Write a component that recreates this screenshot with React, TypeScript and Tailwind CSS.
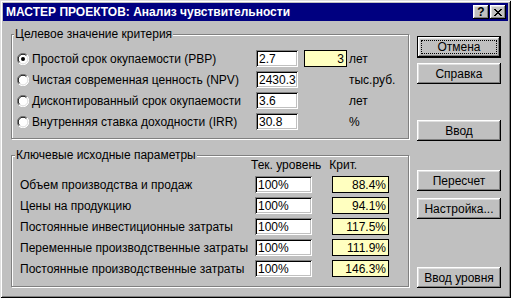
import React from "react";

const raised =
  "shadow-[inset_-1px_-1px_0_#000,inset_1px_1px_0_#fff,inset_-2px_-2px_0_#808080,inset_2px_2px_0_#dfdfdf]";
const sunken =
  "shadow-[inset_1px_1px_0_#808080,inset_-1px_-1px_0_#fff,inset_2px_2px_0_#000,inset_-2px_-2px_0_#c0c0c0]";
const etched = "border border-[#808080] shadow-[inset_1px_1px_0_#fff,1px_1px_0_#fff]";

function Radio({ checked }: { checked?: boolean }) {
  return (
    <svg width="12" height="12" viewBox="0 0 12 12" className="shrink-0">
      <circle cx="6" cy="6" r="5.5" fill="#fff" />
      <path d="M1.9 10.1 A5.5 5.5 0 0 1 10.1 1.9" stroke="#808080" strokeWidth="1" fill="none" />
      <path d="M10.1 1.9 A5.5 5.5 0 0 1 1.9 10.1" stroke="#fff" strokeWidth="1" fill="none" />
      <path d="M2.6 9.4 A4.5 4.5 0 0 1 9.4 2.6" stroke="#000" strokeWidth="1" fill="none" />
      <path d="M9.4 2.6 A4.5 4.5 0 0 1 2.6 9.4" stroke="#dfdfdf" strokeWidth="1" fill="none" />
      {checked && <circle cx="6" cy="6" r="2" fill="#000" />}
    </svg>
  );
}

function Button({ label, isDefault, className = "" }: { label: string; isDefault?: boolean; className?: string }) {
  if (isDefault) {
    return (
      <div className={`w-[84px] h-[22px] border border-black ${className}`}>
        <div className={`w-full h-full ${raised} flex items-center justify-center p-[3px]`}>
          <div className="w-full h-full border border-dotted border-black flex items-center justify-center leading-none">
            {label}
          </div>
        </div>
      </div>
    );
  }
  return (
    <div className={`w-[84px] h-[21px] ${raised} flex items-center justify-center leading-none ${className}`}>
      {label}
    </div>
  );
}

function WhiteBox({ value, w }: { value: string; w: string }) {
  return (
    <div className={`${w} h-[17px] bg-white ${sunken} flex items-center pl-[3px] leading-none`}>{value}</div>
  );
}

function YellowBox({ value, w }: { value: string; w: string }) {
  return (
    <div className={`${w} h-[17px] bg-[#ffffc0] border border-black flex items-center justify-end pr-[2px] leading-none`}>
      {value}
    </div>
  );
}

export default function App() {
  const crit = [
    { label: "Простой срок окупаемости (PBP)", v: "2.7", y: "3", u: "лет", c: true },
    { label: "Чистая современная ценность (NPV)", v: "2430.3", u: "тыс.руб." },
    { label: "Дисконтированный срок окупаемости", v: "3.6", u: "лет" },
    { label: "Внутренняя ставка доходности (IRR)", v: "30.8", u: "%" },
  ];
  const params = [
    ["Объем производства и продаж", "88.4%"],
    ["Цены на продукцию", "94.1%"],
    ["Постоянные инвестиционные затраты", "117.5%"],
    ["Переменные производственные затраты", "111.9%"],
    ["Постоянные производственные затраты", "146.3%"],
  ];
  return (
    <div
      className="w-[511px] h-[298px] bg-[#c0c0c0] p-[3px] flex flex-col text-[12px] text-black shadow-[inset_1px_1px_0_#dfdfdf,inset_-1px_-1px_0_#000,inset_2px_2px_0_#fff,inset_-2px_-2px_0_#808080]"
      style={{ fontFamily: '"Liberation Sans", Arial, sans-serif' }}
    >
      {/* Title bar */}
      <div className="h-[18px] bg-[#000080] flex items-center pl-[3px] pr-[2px]">
        <div className="text-white font-bold text-[12px] leading-none flex-1 whitespace-nowrap">
          МАСТЕР ПРОЕКТОВ: Анализ чувствительности
        </div>
        <div className={`w-[16px] h-[14px] bg-[#c0c0c0] ${raised} flex items-center justify-center font-bold text-[12px] leading-none pb-[1px]`}>
          ?
        </div>
        <div className={`w-[16px] h-[14px] ml-[1px] bg-[#c0c0c0] ${raised} flex items-center justify-center`}>
          <svg width="8" height="7" viewBox="0 0 8 7" shapeRendering="crispEdges">
            <path d="M0 0h2v1H0zM6 0h2v1H6zM1 1h2v1H1zM5 1h2v1H5zM2 2h4v1H2zM3 3h2v1H3zM2 4h4v1H2zM1 5h2v1H1zM5 5h2v1H5zM0 6h2v1H0zM6 6h2v1H6z" fill="#000" />
          </svg>
        </div>
      </div>

      <div className="flex flex-1">
        {/* Left column */}
        <div className="ml-[8px] w-[398px] flex flex-col">
          <div className={`relative mt-[13px] h-[105px] ${etched} pt-[15px] pl-[5px]`}>
            <span className="absolute left-[2px] top-[-8px] bg-[#c0c0c0] px-[1px] leading-[14px] whitespace-nowrap">
              Целевое значение критерия
            </span>
            <div className="flex flex-col gap-[4px]">
              {crit.map((r) => (
                <div key={r.label} className="flex items-center h-[17px]">
                  <div className="w-[239px] flex items-center gap-[3px] whitespace-nowrap">
                    <Radio checked={r.c} />
                    <span>{r.label}</span>
                  </div>
                  <WhiteBox value={r.v} w="w-[42px]" />
                  <div className="w-[43px] ml-[6px]">{r.y && <YellowBox value={r.y} w="w-[43px]" />}</div>
                  <span className="ml-[2px] whitespace-nowrap">{r.u}</span>
                </div>
              ))}
            </div>
          </div>

          <div className={`relative mt-[16px] h-[132px] ${etched} pt-[2px] pl-[8px]`}>
            <span className="absolute left-[3px] top-[-8px] bg-[#c0c0c0] px-[1px] leading-[14px] whitespace-nowrap">
              Ключевые исходные параметры
            </span>
            <div className="flex h-[14px] items-center leading-[14px] mb-[4px]">
              <span className="ml-[231px] whitespace-nowrap">Тек. уровень</span>
              <span className="ml-[8px]">Крит.</span>
            </div>
            <div className="flex flex-col gap-[4px]">
              {params.map(([l, c]) => (
                <div key={l} className="flex items-center h-[17px]">
                  <span className="w-[235px] whitespace-nowrap">{l}</span>
                  <WhiteBox value="100%" w="w-[57px]" />
                  <div className="ml-[20px]">
                    <YellowBox value={c} w="w-[57px]" />
                  </div>
                </div>
              ))}
            </div>
          </div>
        </div>

        {/* Right column */}
        <div className="ml-[8px] flex flex-col">
          <Button label="Отмена" isDefault className="mt-[15px]" />
          <Button label="Справка" className="mt-[5px]" />
          <Button label="Ввод" className="mt-[36px]" />
          <Button label="Пересчет" className="mt-[29px]" />
          <Button label="Настройка..." className="mt-[7px]" />
          <Button label="Ввод уровня" className="mt-[48px]" />
        </div>
      </div>
    </div>
  );
}
